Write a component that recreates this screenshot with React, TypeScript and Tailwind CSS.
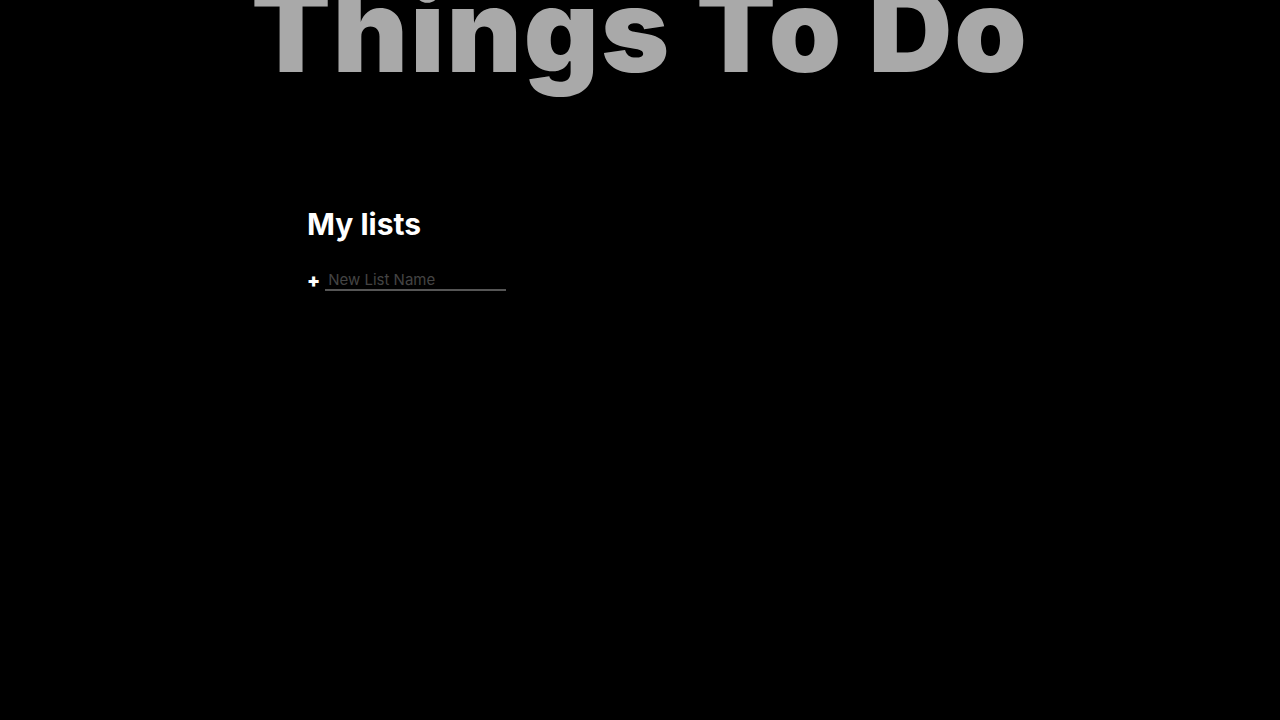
import React from "react";

export default function App() {
  return (
    <div className="min-h-[720px] w-full bg-black overflow-hidden" style={{ fontFamily: "Inter, 'Noto Sans', sans-serif" }}>
      <h1 className="mt-[-40px] text-center text-[116px] leading-[140px] font-black text-[#a9a9a9] tracking-[2px]">
        Things To Do
      </h1>
      <div className="ml-[307px] mt-[104px]">
        <h2 className="text-[30px] leading-[40px] font-bold text-white">My lists</h2>
        <div className="mt-[25px] flex items-center gap-[5px]">
          <span className="text-white font-black text-[19px] leading-none">+</span>
          <input
            className="w-[181px] h-[22px] border-b-2 border-[#555] bg-transparent px-[3px] py-0 text-[15px] leading-[18px] text-white outline-none placeholder:text-[#444]"
            placeholder="New List Name"
          />
        </div>
      </div>
    </div>
  );
}
